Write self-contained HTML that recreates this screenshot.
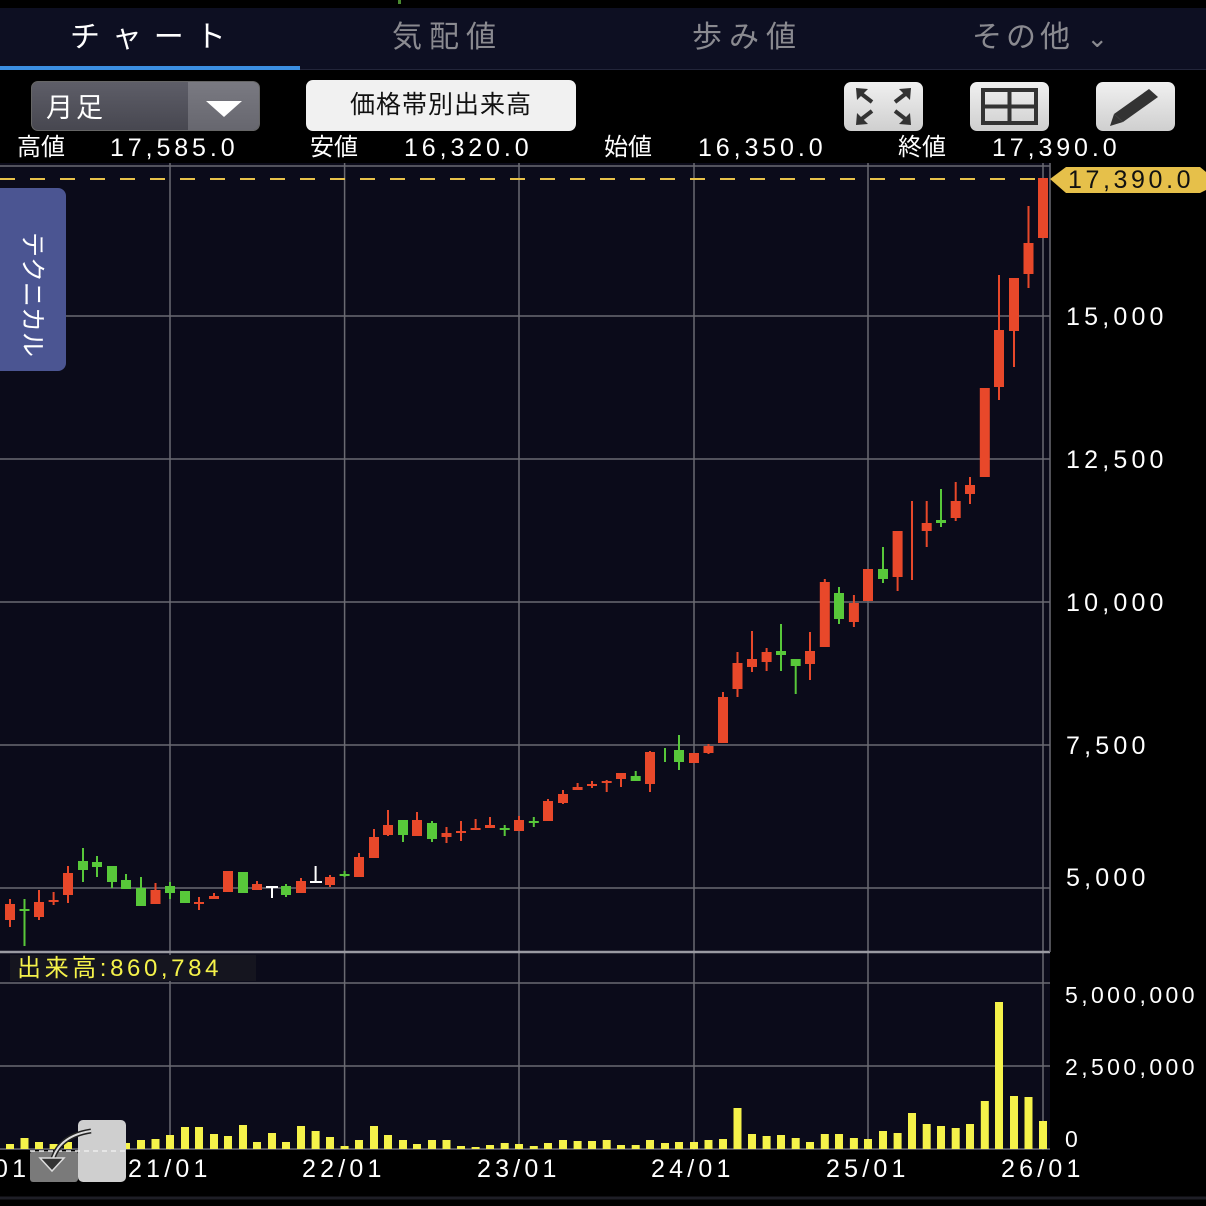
<!DOCTYPE html>
<html><head><meta charset="utf-8">
<style>
*{margin:0;padding:0;box-sizing:border-box}
body{width:1206px;height:1206px;background:#000;overflow:hidden;position:relative;font-family:"Liberation Sans","Noto Sans CJK JP",sans-serif;color:#fff}
.abs{position:absolute}
.tabs{left:0;top:8px;width:1206px;height:62px;background:#0d0f22;border-bottom:1px solid #22253a}
.tab{position:absolute;top:8px;font-size:30px;line-height:44px;color:#8a8a90}
.row{position:absolute;top:134px;height:28px;line-height:28px}
.num{font-size:25px;letter-spacing:3.9px}
.lbl{font-size:24px}
.btn{border-radius:7px}
</style></head><body>
<div class="abs tabs">
  <div class="tab" style="left:70px;color:#fff;letter-spacing:12px">チャート</div>
  <div class="tab" style="left:392px;letter-spacing:7px">気配値</div>
  <div class="tab" style="left:692px;letter-spacing:7px">歩み値</div>
  <div class="tab" style="left:972px;letter-spacing:4px">その他 <span style="font-size:26px">&#8964;</span></div>
  <div class="abs" style="left:0;top:58px;width:300px;height:4px;background:#3b8fe2"></div>
</div>
<div class="abs" style="left:398px;top:0;width:3px;height:4px;background:#4a8a30"></div>

<!-- toolbar -->
<div class="abs btn" style="left:31px;top:81px;width:229px;height:50px;background:linear-gradient(#5e5e68,#474750);border:1px solid #666;overflow:hidden">
  <div class="abs" style="left:14px;top:4px;font-size:27px;letter-spacing:3px">月足</div>
  <div class="abs" style="left:156px;top:0;width:73px;height:50px;background:linear-gradient(#7a7a82,#66666e)"></div>
  <div class="abs" style="left:174px;top:19px;width:0;height:0;border-left:18px solid transparent;border-right:18px solid transparent;border-top:16px solid #fff"></div>
</div>
<div class="abs btn" style="left:306px;top:80px;width:270px;height:51px;background:#f1f1f1;color:#111;font-size:25px;text-align:center;line-height:51px;letter-spacing:1px">価格帯別出来高</div>
<div class="abs btn" style="left:844px;top:82px;width:79px;height:49px;background:linear-gradient(#f0f0f0,#cfcfcf)">
 <svg width="79" height="49" viewBox="0 0 79 49"><g fill="#333" stroke="#333" stroke-width="4"><line x1="15" y1="10" x2="28" y2="20"/><line x1="64" y1="10" x2="51" y2="20"/><line x1="15" y1="39" x2="28" y2="29"/><line x1="64" y1="39" x2="51" y2="29"/></g>
 <g fill="#333"><polygon points="12,6 24,7 13,18"/><polygon points="67,6 55,7 66,18"/><polygon points="12,43 24,42 13,31"/><polygon points="67,43 55,42 66,31"/></g></svg>
</div>
<div class="abs btn" style="left:970px;top:82px;width:79px;height:49px;background:linear-gradient(#f0f0f0,#cfcfcf)">
 <svg width="79" height="49"><rect x="13" y="8" width="53" height="33" fill="none" stroke="#333" stroke-width="4"/><line x1="39.5" y1="8" x2="39.5" y2="41" stroke="#333" stroke-width="4"/><line x1="13" y1="24.5" x2="66" y2="24.5" stroke="#333" stroke-width="4"/></svg>
</div>
<div class="abs btn" style="left:1096px;top:82px;width:79px;height:49px;background:linear-gradient(#f0f0f0,#cfcfcf)">
 <svg width="79" height="49"><polygon points="53,7 62,15 27,40 18,32" fill="#333"/><polygon points="18,32 27,40 14,44" fill="#333"/></svg>
</div>

<!-- info row -->
<div class="row lbl" style="left:17px">高値</div><div class="row num" style="left:110px">17,585.0</div>
<div class="row lbl" style="left:310px">安値</div><div class="row num" style="left:404px">16,320.0</div>
<div class="row lbl" style="left:604px">始値</div><div class="row num" style="left:698px">16,350.0</div>
<div class="row lbl" style="left:898px">終値</div><div class="row num" style="left:992px">17,390.0</div>

<!-- chart -->
<svg class="abs" style="left:0;top:0" width="1206" height="1206">
<rect x="0" y="163" width="1050" height="987" fill="#0b0b1a"/>
<g stroke="#6a6a72" stroke-width="1.5">
<line x1="0" y1="166" x2="1050" y2="166"/>
<line x1="170" y1="163" x2="170" y2="1150"/><line x1="344.6" y1="163" x2="344.6" y2="1150"/><line x1="519" y1="163" x2="519" y2="1150"/><line x1="694" y1="163" x2="694" y2="1150"/><line x1="868" y1="163" x2="868" y2="1150"/><line x1="1043" y1="163" x2="1043" y2="1150"/>
<line x1="0" y1="316" x2="1050" y2="316"/><line x1="0" y1="459" x2="1050" y2="459"/><line x1="0" y1="602" x2="1050" y2="602"/><line x1="0" y1="745" x2="1050" y2="745"/><line x1="0" y1="888" x2="1050" y2="888"/>
<line x1="0" y1="983" x2="1050" y2="983"/><line x1="0" y1="1066" x2="1050" y2="1066"/>
</g>
<line x1="0" y1="952" x2="1050" y2="952" stroke="#9a9aa2" stroke-width="2.5"/>
<line x1="0" y1="1149" x2="1050" y2="1149" stroke="#6a6a72" stroke-width="1.5"/>
<line x1="1050" y1="163" x2="1050" y2="952" stroke="#6a6a72" stroke-width="1.5"/>
<line x1="0" y1="179" x2="1050" y2="179" stroke="#e8c24a" stroke-width="2" stroke-dasharray="15,15"/>
<polygon points="1050,179 1066,167 1200,167 1206,172 1206,190 1200,193 1066,193" fill="#e6c04a"/>
<text x="1068" y="188" font-size="25" fill="#111" letter-spacing="3.6" font-family="Liberation Sans">17,390.0</text>

<g id="wicks" stroke-width="2">
<g stroke="#e8482a">
<line x1="10" y1="899" x2="10" y2="927"/><line x1="39" y1="890" x2="39" y2="920"/><line x1="53.6" y1="892" x2="53.6" y2="905"/><line x1="68" y1="866" x2="68" y2="903"/><line x1="155.5" y1="883" x2="155.5" y2="904"/><line x1="199" y1="897" x2="199" y2="910"/><line x1="214" y1="893" x2="214" y2="899"/><line x1="257" y1="881" x2="257" y2="890"/><line x1="301" y1="878" x2="301" y2="893"/><line x1="330" y1="875" x2="330" y2="887"/><line x1="359" y1="853" x2="359" y2="877"/><line x1="374" y1="829" x2="374" y2="858"/><line x1="388" y1="810" x2="388" y2="836"/><line x1="417" y1="812" x2="417" y2="836"/><line x1="446.5" y1="827" x2="446.5" y2="843"/><line x1="461" y1="821" x2="461" y2="841"/><line x1="475.6" y1="819" x2="475.6" y2="830"/><line x1="490" y1="817" x2="490" y2="828"/><line x1="519" y1="816" x2="519" y2="831"/><line x1="548" y1="799" x2="548" y2="821"/><line x1="563" y1="790" x2="563" y2="804"/><line x1="577.6" y1="783" x2="577.6" y2="790"/><line x1="592" y1="781" x2="592" y2="788"/><line x1="606.7" y1="780" x2="606.7" y2="792"/><line x1="621" y1="773" x2="621" y2="787"/><line x1="650" y1="751" x2="650" y2="792"/><line x1="708.5" y1="744" x2="708.5" y2="754"/><line x1="723" y1="692" x2="723" y2="743"/><line x1="737.5" y1="652" x2="737.5" y2="697"/><line x1="752" y1="631" x2="752" y2="672"/><line x1="766.6" y1="648" x2="766.6" y2="671"/><line x1="810" y1="632" x2="810" y2="680"/><line x1="824.8" y1="579" x2="824.8" y2="647"/><line x1="853.9" y1="595" x2="853.9" y2="627"/><line x1="897.6" y1="531" x2="897.6" y2="591"/><line x1="912" y1="501" x2="912" y2="580"/><line x1="926.7" y1="501" x2="926.7" y2="547"/><line x1="955.7" y1="482" x2="955.7" y2="521"/><line x1="970" y1="477" x2="970" y2="504"/><line x1="999" y1="275" x2="999" y2="400"/><line x1="1014" y1="278" x2="1014" y2="367"/><line x1="1028.5" y1="206" x2="1028.5" y2="288"/>
</g>
<g stroke="#58c83a">
<line x1="24.5" y1="899" x2="24.5" y2="946"/><line x1="83" y1="848" x2="83" y2="882"/><line x1="97" y1="856" x2="97" y2="877"/><line x1="112" y1="866" x2="112" y2="888"/><line x1="126" y1="874" x2="126" y2="889"/><line x1="141" y1="877" x2="141" y2="906"/><line x1="170" y1="882" x2="170" y2="899"/><line x1="286" y1="884" x2="286" y2="897"/><line x1="344.6" y1="871" x2="344.6" y2="877"/><line x1="403" y1="820" x2="403" y2="842"/><line x1="432" y1="821" x2="432" y2="842"/><line x1="504.7" y1="825" x2="504.7" y2="836"/><line x1="533.8" y1="817" x2="533.8" y2="827"/><line x1="635.7" y1="771" x2="635.7" y2="781"/><line x1="665" y1="748" x2="665" y2="762"/><line x1="679" y1="735" x2="679" y2="770"/><line x1="781" y1="624" x2="781" y2="671"/><line x1="795.7" y1="659" x2="795.7" y2="694"/><line x1="839" y1="587" x2="839" y2="624"/><line x1="883" y1="547" x2="883" y2="583"/><line x1="941" y1="489" x2="941" y2="527"/>
</g>
<g stroke="#fff"><line x1="266" y1="887" x2="278" y2="887"/><line x1="272" y1="887" x2="272" y2="898"/><line x1="310" y1="882" x2="322" y2="882"/><line x1="315.6" y1="866" x2="315.6" y2="882"/></g>
</g>
<g fill="#e8482a">
<rect x="5" y="904" width="10" height="16"/><rect x="34" y="902" width="10" height="15"/><rect x="48.6" y="900" width="10" height="2"/><rect x="63" y="873" width="10" height="22"/><rect x="150.5" y="890" width="10" height="14"/><rect x="194" y="902" width="10" height="2"/><rect x="209" y="896" width="10" height="3"/><rect x="223" y="871" width="10" height="21"/><rect x="252" y="884" width="10" height="6"/><rect x="296" y="881" width="10" height="12"/><rect x="325" y="877" width="10" height="8"/><rect x="354" y="857" width="10" height="20"/><rect x="369" y="837" width="10" height="21"/><rect x="383" y="825" width="10" height="10"/><rect x="412" y="820" width="10" height="16"/><rect x="441.5" y="833" width="10" height="4"/><rect x="456" y="831" width="10" height="2"/><rect x="470.6" y="828" width="10" height="2"/><rect x="485" y="825" width="10" height="3"/><rect x="514" y="820" width="10" height="11"/><rect x="543" y="801" width="10" height="20"/><rect x="558" y="794" width="10" height="9"/><rect x="572.6" y="787" width="10" height="3"/><rect x="587" y="784" width="10" height="2"/><rect x="601.7" y="781" width="10" height="2"/><rect x="616" y="773" width="10" height="6"/><rect x="645" y="752" width="10" height="32"/><rect x="689" y="753" width="10" height="10"/><rect x="703.5" y="746" width="10" height="7"/><rect x="718" y="697" width="10" height="46"/><rect x="732.5" y="663" width="10" height="26"/><rect x="747" y="659" width="10" height="8"/><rect x="761.6" y="652" width="10" height="10"/><rect x="805" y="651" width="10" height="13"/><rect x="819.8" y="582" width="10" height="65"/><rect x="848.9" y="603" width="10" height="19"/><rect x="863" y="569" width="10" height="32"/><rect x="892.6" y="531" width="10" height="46"/><rect x="921.7" y="523" width="10" height="8"/><rect x="950.7" y="501" width="10" height="17"/><rect x="965" y="485" width="10" height="9"/><rect x="979.8" y="388" width="10" height="89"/><rect x="994" y="330" width="10" height="57"/><rect x="1009" y="278" width="10" height="53"/><rect x="1023.5" y="243" width="10" height="31"/><rect x="1038" y="178" width="10" height="60"/>
</g>
<g fill="#58c83a">
<rect x="19.5" y="909" width="10" height="2"/><rect x="78" y="861" width="10" height="9"/><rect x="92" y="862" width="10" height="5"/><rect x="107" y="866" width="10" height="16"/><rect x="121" y="880" width="10" height="9"/><rect x="136" y="888" width="10" height="18"/><rect x="165" y="886" width="10" height="7"/><rect x="180" y="891" width="10" height="12"/><rect x="238" y="872" width="10" height="21"/><rect x="281" y="886" width="10" height="9"/><rect x="339.6" y="874" width="10" height="2"/><rect x="398" y="820" width="10" height="15"/><rect x="427" y="823" width="10" height="16"/><rect x="499.7" y="828" width="10" height="2"/><rect x="528.8" y="821" width="10" height="2"/><rect x="630.7" y="776" width="10" height="5"/><rect x="674" y="750" width="10" height="12"/><rect x="776" y="651" width="10" height="4"/><rect x="790.7" y="659" width="10" height="7"/><rect x="834" y="593" width="10" height="26"/><rect x="878" y="569" width="10" height="10"/><rect x="936" y="520" width="10" height="3"/>
</g>
<!-- volume -->
<g fill="#f5f24a">
<rect x="6" y="1144" width="8" height="5"/><rect x="20.5" y="1138" width="8" height="11"/><rect x="35" y="1142" width="8" height="7"/><rect x="49.6" y="1144" width="8" height="5"/><rect x="64" y="1142" width="8" height="7"/><rect x="79" y="1141" width="8" height="8"/><rect x="93" y="1139" width="8" height="10"/><rect x="108" y="1141" width="8" height="8"/><rect x="122" y="1143" width="8" height="6"/><rect x="137" y="1140" width="8" height="9"/><rect x="151.5" y="1139" width="8" height="10"/><rect x="166" y="1135" width="8" height="14"/><rect x="181" y="1127" width="8" height="22"/><rect x="195" y="1127" width="8" height="22"/><rect x="210" y="1134" width="8" height="15"/><rect x="224" y="1136" width="8" height="13"/><rect x="239" y="1125" width="8" height="24"/><rect x="253" y="1142" width="8" height="7"/><rect x="268" y="1133" width="8" height="16"/><rect x="282" y="1142" width="8" height="7"/><rect x="297" y="1126" width="8" height="23"/><rect x="311.6" y="1131" width="8" height="18"/><rect x="326" y="1137" width="8" height="12"/><rect x="340.6" y="1146" width="8" height="3"/><rect x="355" y="1140" width="8" height="9"/><rect x="370" y="1126" width="8" height="23"/><rect x="384" y="1135" width="8" height="14"/><rect x="399" y="1140" width="8" height="9"/><rect x="413" y="1144" width="8" height="5"/><rect x="428" y="1140" width="8" height="9"/><rect x="442.5" y="1140" width="8" height="9"/><rect x="457" y="1146" width="8" height="3"/><rect x="471.6" y="1147" width="8" height="2"/><rect x="486" y="1145" width="8" height="4"/><rect x="500.7" y="1143" width="8" height="6"/><rect x="515" y="1144" width="8" height="5"/><rect x="529.8" y="1146" width="8" height="3"/><rect x="544" y="1143" width="8" height="6"/><rect x="559" y="1140" width="8" height="9"/><rect x="573.6" y="1141" width="8" height="8"/><rect x="588" y="1141" width="8" height="8"/><rect x="602.7" y="1140" width="8" height="9"/><rect x="617" y="1145" width="8" height="4"/><rect x="631.7" y="1145" width="8" height="4"/><rect x="646" y="1140" width="8" height="9"/><rect x="661" y="1143" width="8" height="6"/><rect x="675" y="1142" width="8" height="7"/><rect x="690" y="1142" width="8" height="7"/><rect x="704.5" y="1140" width="8" height="9"/><rect x="719" y="1139" width="8" height="10"/><rect x="733.5" y="1108" width="8" height="41"/><rect x="748" y="1134" width="8" height="15"/><rect x="762.6" y="1136" width="8" height="13"/><rect x="777" y="1135" width="8" height="14"/><rect x="791.7" y="1138" width="8" height="11"/><rect x="806" y="1142" width="8" height="7"/><rect x="820.8" y="1134" width="8" height="15"/><rect x="835" y="1134" width="8" height="15"/><rect x="849.9" y="1138" width="8" height="11"/><rect x="864" y="1139" width="8" height="10"/><rect x="879" y="1131" width="8" height="18"/><rect x="893.6" y="1133" width="8" height="16"/><rect x="908" y="1113" width="8" height="36"/><rect x="922.7" y="1124" width="8" height="25"/><rect x="937" y="1126" width="8" height="23"/><rect x="951.7" y="1128" width="8" height="21"/><rect x="966" y="1124" width="8" height="25"/><rect x="980.8" y="1101" width="8" height="48"/><rect x="995" y="1002" width="8" height="147"/><rect x="1010" y="1096" width="8" height="53"/><rect x="1024.5" y="1097" width="8" height="52"/><rect x="1039" y="1121" width="8" height="28"/>
</g>
<rect x="10" y="955" width="246" height="26" fill="#15151f"/>
<text x="17" y="976" font-size="24" fill="#f5f24a" letter-spacing="3.6" font-family="Liberation Sans,Noto Sans CJK JP,sans-serif">出来高:860,784</text>
<g fill="#fff" font-size="25" letter-spacing="4.2" font-family="Liberation Sans">
<text x="1066" y="325">15,000</text><text x="1066" y="468">12,500</text><text x="1066" y="611">10,000</text><text x="1066" y="754">7,500</text><text x="1066" y="886">5,000</text>
<text x="1065" y="1003" font-size="23" letter-spacing="3.4">5,000,000</text><text x="1065" y="1075" font-size="23" letter-spacing="3.4">2,500,000</text><text x="1065" y="1147" font-size="23">0</text>
<text x="-6" y="1177">01</text><text x="128" y="1177">21/01</text><text x="302" y="1177">22/01</text><text x="477" y="1177">23/01</text><text x="651" y="1177">24/01</text><text x="826" y="1177">25/01</text><text x="1001" y="1177">26/01</text>
</g>
<line x1="0" y1="1198" x2="1206" y2="1198" stroke="#1e1e26" stroke-width="3"/>
<!-- bottom icon -->
<rect x="78" y="1120" width="48" height="62" rx="5" fill="#cfcfcf"/>
<rect x="30" y="1151" width="48" height="31" rx="3" fill="#7a7a7a"/>
<line x1="30" y1="1151" x2="126" y2="1151" stroke="#eee" stroke-width="1.5" stroke-dasharray="5,4"/>
<path d="M91 1131 Q58 1136 52 1162" fill="none" stroke="#222" stroke-width="5"/>
<path d="M91 1131 Q58 1136 52 1162" fill="none" stroke="#ddd" stroke-width="2"/>
<polygon points="40,1158 64,1158 52,1171" fill="#333" stroke="#ddd" stroke-width="1.5"/>
</svg>

<!-- technical tab -->
<div class="abs" style="left:0;top:188px;width:66px;height:183px;background:#4b5592;border-radius:0 8px 8px 0;overflow:hidden">
  <div class="abs" style="left:17px;top:44px;font-size:25px;line-height:30px;writing-mode:vertical-rl;text-orientation:sideways;color:#fff">テクニカル</div>
</div>
</body></html>
